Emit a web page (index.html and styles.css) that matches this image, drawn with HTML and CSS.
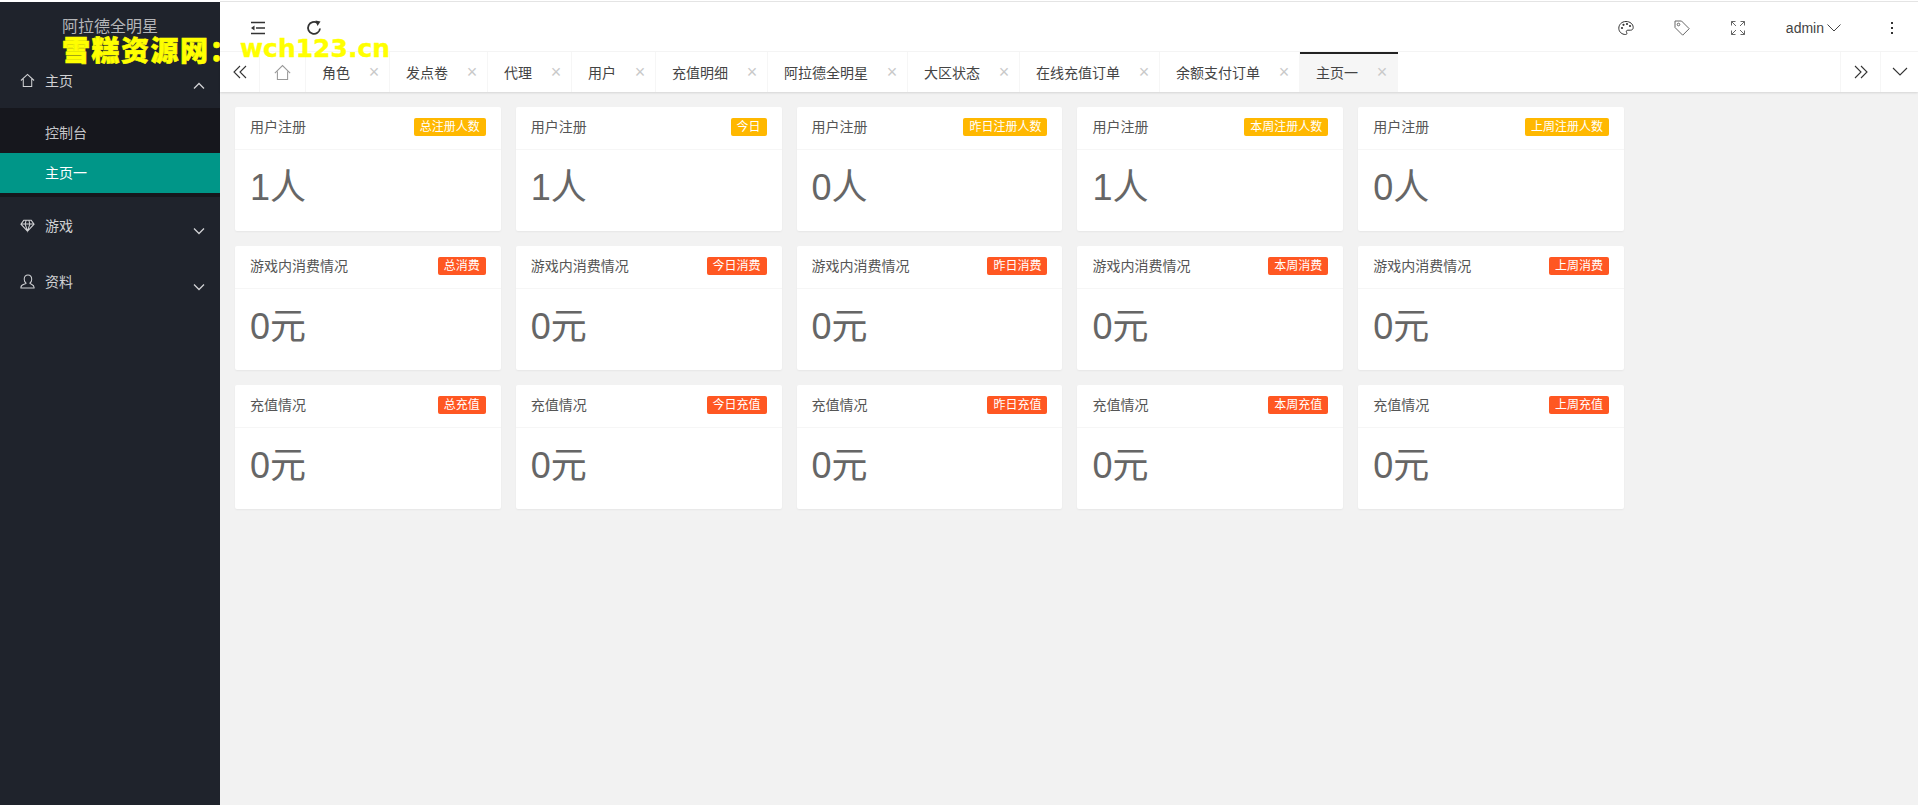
FILE: index.html
```html
<!DOCTYPE html>
<html lang="zh-CN">
<head>
    <meta charset="UTF-8">
    <meta name="viewport" content="width=device-width, initial-scale=1.0">
    <title>主页一</title>
    <link rel="stylesheet" href="styles.css">
</head>
<body>

<div class="app">
    <aside class="side">
        <div class="logo">阿拉德全明星</div>
        <ul class="nav">
            <li class="nav-item">
                <a class="nav-link">
                    <svg class="nav-icon" viewBox="0 0 16 16"><path d="M1 8 8 1.500 15 8M3.500 6.500V14.500H12.500V6.500"/></svg>
                    <span>主页</span>
                    <svg class="nav-arrow" viewBox="0 0 12 8"><path d="M1 6.500 6 1.500 11 6.500"/></svg>
                </a>
                <ul class="sub">
                    <li class="sub-item">控制台</li>
                    <li class="sub-item active">主页一</li>
                </ul>
            </li>
            <li class="nav-item">
                <a class="nav-link">
                    <svg class="nav-icon" viewBox="0 0 16 16"><path d="M4 2.500H12L15 6.500 8 14 1 6.500ZM1 6.500H15M5.500 6.500 8 14 10.500 6.500M5.500 6.500 6.500 2.500M10.500 6.500 9.500 2.500"/></svg>
                    <span>游戏</span>
                    <svg class="nav-arrow" viewBox="0 0 12 8"><path d="M1 1.500 6 6.500 11 1.500"/></svg>
                </a>
            </li>
            <li class="nav-item">
                <a class="nav-link">
                    <svg class="nav-icon" viewBox="0 0 16 16"><path d="M8.500 1C6 1 4.500 3 4.500 5.500 4.500 7.500 5.300 9 6.500 9.800 6.500 10.800 1 11 1 14V15H15V14C15 11.500 11.500 11 10.500 9.800 11.800 9 12.500 7.500 12.500 5.500 12.500 3 11 1 8.500 1Z"/></svg>
                    <span>资料</span>
                    <svg class="nav-arrow" viewBox="0 0 12 8"><path d="M1 1.500 6 6.500 11 1.500"/></svg>
                </a>
            </li>
        </ul>
    </aside>

    <div class="main">
        <header class="top">
            <div class="top-left">
                <svg class="top-icon" viewBox="0 0 16 16"><path d="M1 2.500H15M6 8H15M1 13.500H15"/><path class="fill" d="M4.500 5.500V10.500L1 8Z"/></svg>
                <svg class="top-icon heavy" viewBox="0 0 16 16"><path d="M14 8.500A6 6 0 1 1 11.500 3"/><path class="fill" d="M9.500 .5 14.500 1.500 11.500 6Z"/></svg>
            </div>
            <div class="top-right">
                <svg class="top-icon thin" viewBox="0 0 16 16"><path d="M8 1.500C3.500 1.500 .8 4.800.8 8.200.8 12 4 14.500 7.500 14.500c1.800 0 1.500-1.500 1-2.300-.6-1.200.2-2 1.500-2h2.500c1.500 0 2.700-1 2.700-2.700C15.200 4 12 1.500 8 1.500Z"/><circle class="fill" cx="4" cy="8" r="1.100"/><circle class="fill" cx="5.500" cy="4.800" r="1.100"/><circle class="fill" cx="9" cy="4" r="1.100"/><circle class="fill" cx="12" cy="6" r="1.100"/></svg>
                <svg class="top-icon thin grey" viewBox="0 0 16 16"><path d="M1 1H7.500L15.200 8.700 8.700 15.200 1 7.500Z"/><circle cx="4.500" cy="4.500" r="1.300"/></svg>
                <svg class="top-icon thin grey" viewBox="0 0 16 16"><path d="M1.500 5.500V1.500H5.500M1.500 1.500 6 6M14.500 5.500V1.500H10.500M14.500 1.500 10 6M1.500 10.500V14.500H5.500M1.500 14.500 6 10M14.500 10.500V14.500H10.500M14.500 14.500 10 10"/></svg>
                <div class="user">admin<svg class="user-arrow" viewBox="0 0 14 8"><path d="M.5 .5 7 7 13.500 .5"/></svg></div>
                <div class="dots"><i></i><i></i><i></i></div>
            </div>
        </header>

        <nav class="tabs">
            <div class="tab-btn first"><svg class="tab-icon" viewBox="0 0 16 14"><path d="M8 1 2 7 8 13M14 1 8 7 14 13"/></svg></div>
            <div class="tab-home"><svg class="home-icon" viewBox="0 0 16 16"><path d="M.8 8.500 8 1.500 15.200 8.500M3.200 7V14.500H12.800V7"/></svg></div>
            <div class="tab-list">
                <div class="tab">角色<span class="close">×</span></div>
                <div class="tab">发点卷<span class="close">×</span></div>
                <div class="tab">代理<span class="close">×</span></div>
                <div class="tab">用户<span class="close">×</span></div>
                <div class="tab">充值明细<span class="close">×</span></div>
                <div class="tab">阿拉德全明星<span class="close">×</span></div>
                <div class="tab">大区状态<span class="close">×</span></div>
                <div class="tab">在线充值订单<span class="close">×</span></div>
                <div class="tab">余额支付订单<span class="close">×</span></div>
                <div class="tab current">主页一<span class="close">×</span></div>
            </div>
            <div class="tab-btn"><svg class="tab-icon" viewBox="0 0 16 14"><path d="M2 1 8 7 2 13M8 1 14 7 8 13"/></svg></div>
            <div class="tab-btn last"><svg class="tab-icon" viewBox="0 0 16 10"><path d="M1 1 8 8 15 1"/></svg></div>
        </nav>

        <section class="content">
            <div class="grid">
                <div class="card"><div class="card-head">用户注册<span class="badge yellow">总注册人数</span></div><div class="card-body">1人</div></div>
                <div class="card"><div class="card-head">用户注册<span class="badge yellow">今日</span></div><div class="card-body">1人</div></div>
                <div class="card"><div class="card-head">用户注册<span class="badge yellow">昨日注册人数</span></div><div class="card-body">0人</div></div>
                <div class="card"><div class="card-head">用户注册<span class="badge yellow">本周注册人数</span></div><div class="card-body">1人</div></div>
                <div class="card"><div class="card-head">用户注册<span class="badge yellow">上周注册人数</span></div><div class="card-body">0人</div></div>

                <div class="card"><div class="card-head">游戏内消费情况<span class="badge orange">总消费</span></div><div class="card-body">0元</div></div>
                <div class="card"><div class="card-head">游戏内消费情况<span class="badge orange">今日消费</span></div><div class="card-body">0元</div></div>
                <div class="card"><div class="card-head">游戏内消费情况<span class="badge orange">昨日消费</span></div><div class="card-body">0元</div></div>
                <div class="card"><div class="card-head">游戏内消费情况<span class="badge orange">本周消费</span></div><div class="card-body">0元</div></div>
                <div class="card"><div class="card-head">游戏内消费情况<span class="badge orange">上周消费</span></div><div class="card-body">0元</div></div>

                <div class="card"><div class="card-head">充值情况<span class="badge orange">总充值</span></div><div class="card-body">0元</div></div>
                <div class="card"><div class="card-head">充值情况<span class="badge orange">今日充值</span></div><div class="card-body">0元</div></div>
                <div class="card"><div class="card-head">充值情况<span class="badge orange">昨日充值</span></div><div class="card-body">0元</div></div>
                <div class="card"><div class="card-head">充值情况<span class="badge orange">本周充值</span></div><div class="card-body">0元</div></div>
                <div class="card"><div class="card-head">充值情况<span class="badge orange">上周充值</span></div><div class="card-body">0元</div></div>
            </div>
        </section>
    </div>

    <!-- site stamp across the top of the page -->
    <div class="stamp"><span class="stamp-cn">雪糕资源网：</span><span class="stamp-en">wch123.cn</span></div>
</div>

</body>
</html>
```

FILE: styles.css
```css
* {
    box-sizing: border-box;
}
html, body {
    margin: 0;
    height: 100%;
    overflow: hidden;
}
body {
    font-family: "Liberation Sans", "Noto Sans CJK SC", sans-serif;
    font-size: 14px;
    color: #555;
    background-color: #fff;
}
ul {
    list-style: none;
    margin: 0;
    padding: 0;
}
svg {
    display: block;
    fill: none;
    stroke: currentColor;
}
svg .fill {
    fill: currentColor;
    stroke: none;
}

.app {
    position: relative;
    display: flex;
    height: 100%;
    padding-top: 2px;
}

/* left menu */
.side {
    width: 220px;
    flex: none;
    background-color: #1f232c;
    color: #c8c9cc;
}
.logo {
    height: 50px;
    padding: 15px 0 0 62px;
    font-size: 16px;
    line-height: 20px;
    color: #b4b5b8;
}
.nav-link {
    display: flex;
    align-items: center;
    height: 56px;
    padding: 0 15px 0 20px;
    color: #d0d1d4;
}
.nav-icon {
    width: 15px;
    height: 15px;
    margin-right: 10px;
    stroke-width: 1.1;
}
.nav-arrow {
    width: 12px;
    height: 8px;
    margin: 11px 0 0 auto;
    stroke-width: 1.3;
}
.sub {
    background-color: #16171d;
    padding-bottom: 4px;
}
.sub-item {
    height: 40px;
    line-height: 40px;
    padding-left: 45px;
    color: #c4c5c8;
}
.sub-item:first-child {
    height: 45px;
    line-height: 50px;
}
.sub-item.active {
    background-color: #009688;
    color: #fff;
}

.main {
    flex: 1;
    min-width: 0;
    display: flex;
    flex-direction: column;
    border-top: 1px solid #e4e4e4;
    margin-top: -1px;
}

/* header bar */
.top {
    height: 50px;
    flex: none;
    display: flex;
    justify-content: space-between;
    align-items: center;
    padding-top: 3px;
    background-color: #fff;
    border-bottom: 1px solid #f6f6f6;
}
.top-left {
    display: flex;
    align-items: center;
    gap: 40px;
    padding-left: 30px;
}
.top-right {
    display: flex;
    align-items: center;
}
.top-icon {
    width: 16px;
    height: 16px;
    color: #333;
    stroke-width: 1.5;
}
.top-icon.heavy {
    stroke-width: 1.8;
}
.top-icon.thin {
    stroke-width: 1;
    margin-right: 40px;
}
.top-icon.grey {
    color: #666;
}
.user {
    display: flex;
    align-items: center;
    gap: 2px;
    color: #444;
    line-height: 16px;
}
.user-arrow {
    width: 14px;
    height: 8px;
    margin-left: 1px;
    stroke-width: 1;
}
.dots {
    display: flex;
    flex-direction: column;
    gap: 3px;
    margin: 0 25px 0 50px;
}
.dots i {
    display: block;
    width: 2px;
    height: 2px;
    background-color: #333;
}

/* open pages strip */
.tabs {
    height: 40px;
    flex: none;
    display: flex;
    background-color: #fff;
    box-shadow: 0 1px 2px rgba(0,0,0,0.12);
    position: relative;
    color: #444;
}
.tab-btn {
    width: 40px;
    flex: none;
    display: flex;
    align-items: center;
    justify-content: center;
    border-left: 1px solid #f6f6f6;
    color: #333;
}
.tab-btn.first {
    border-left: none;
    border-right: 1px solid #f6f6f6;
}
.tab-btn.last {
    width: 38px;
}
.tab-icon {
    width: 16px;
    height: 14px;
    stroke-width: 1.1;
}
.tab-btn.last .tab-icon {
    height: 10px;
}
.tab-home {
    width: 46px;
    flex: none;
    display: flex;
    align-items: center;
    justify-content: center;
    border-right: 1px solid #f6f6f6;
    color: #999;
}
.home-icon {
    width: 17px;
    height: 17px;
    stroke-width: 1;
}
.tab-list {
    flex: 1;
    display: flex;
    min-width: 0;
}
.tab {
    display: flex;
    align-items: center;
    padding: 0 7px 0 16px;
    border-right: 1px solid #f6f6f6;
    white-space: nowrap;
}
.tab.current {
    background-color: #f6f6f6;
    border-top: 2px solid #222;
    padding-bottom: 2px;
    padding-right: 8px;
    border-right: none;
}
.close {
    width: 16px;
    margin-left: 16px;
    font-size: 18px;
    line-height: 16px;
    text-align: center;
    color: #c9c9c9;
}

/* stat cards */
.content {
    flex: 1;
    padding: 15px;
    background-color: #f2f2f2;
}
.grid {
    display: grid;
    grid-template-columns: repeat(5, 265.800px);
    gap: 15px;
}
.card {
    height: 124px;
    background-color: #fff;
    border-radius: 2px;
    box-shadow: 0 1px 2px rgba(0,0,0,0.05);
}
.card-head {
    height: 43px;
    padding: 0 15px 2px;
    display: flex;
    justify-content: space-between;
    align-items: center;
    line-height: 40px;
    color: #555;
    border-bottom: 1px solid #f6f6f6;
}
.badge {
    height: 18px;
    line-height: 18px;
    padding: 0 6px;
    font-size: 12px;
    color: #fff;
    border-radius: 2px;
}
.badge.yellow {
    background-color: #ffb800;
}
.badge.orange {
    background-color: #ff5722;
}
.card-body {
    padding: 18px 15px 0;
    font-size: 36px;
    line-height: 40px;
    color: #666;
}

/* site stamp */
.stamp {
    position: absolute;
    top: 30px;
    left: 62px;
    display: flex;
    color: #ff0;
    font-weight: 900;
    line-height: 38px;
    white-space: nowrap;
}
.stamp-cn {
    width: 178px;
    font-family: "Noto Sans CJK SC", sans-serif;
    font-size: 28px;
    letter-spacing: 1.500px;
    -webkit-text-stroke: 0.6px #ff0;
}
.stamp-en {
    font-family: "DejaVu Sans", sans-serif;
    font-size: 25px;
    -webkit-text-stroke: 0.4px #ff0;
}
```
